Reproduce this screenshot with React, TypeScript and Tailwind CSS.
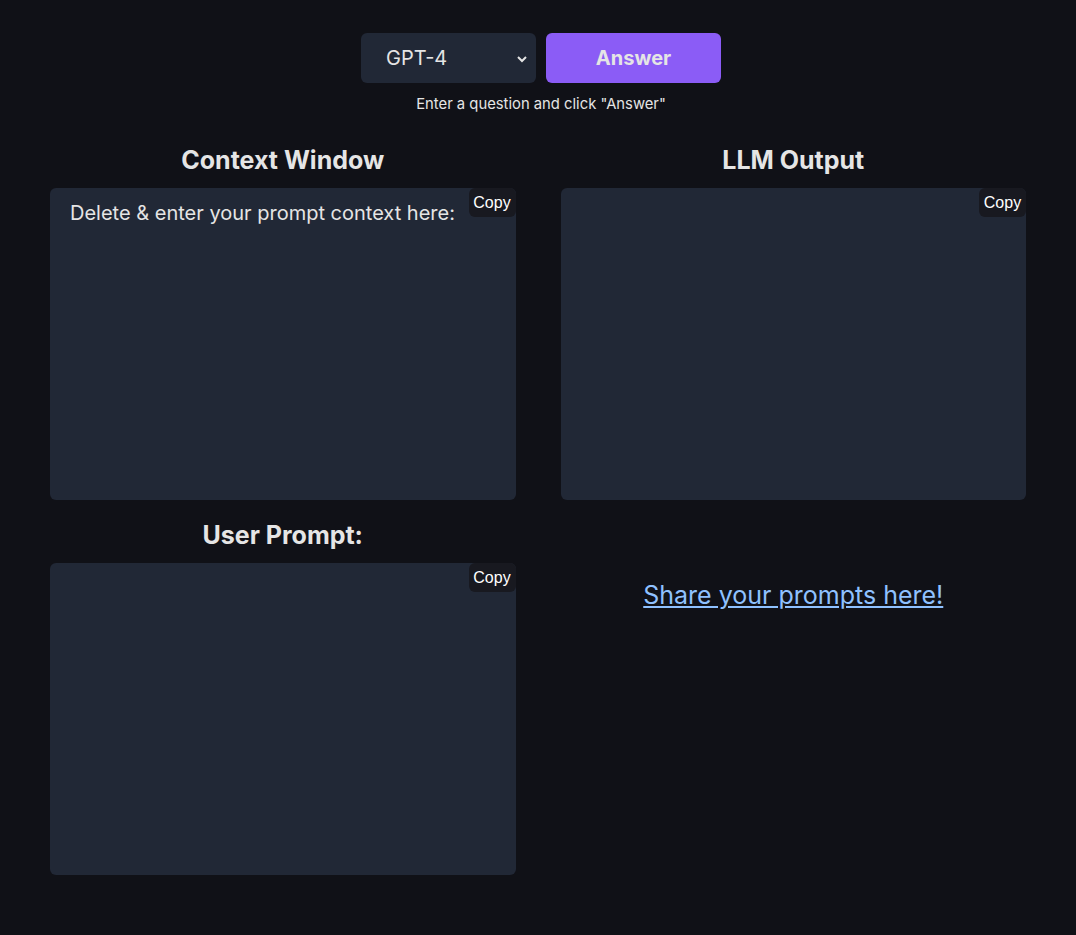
import { useState } from 'react'

function CopyBox({ value, onChange, placeholder }: { value: string; onChange: (v: string) => void; placeholder?: string }) {
  return (
    <div className="relative">
      <textarea
        value={value}
        placeholder={placeholder}
        onChange={(e) => onChange(e.target.value)}
        className="block w-full h-[312px] resize-none rounded-md bg-[#212836] px-5 py-[11px] text-[20px] leading-[28px] text-[#e5e5e5] outline-none"
      />
      <button
        onClick={() => navigator.clipboard?.writeText(value)}
        className="absolute right-0 top-0 h-[29px] w-[47px] rounded-md bg-[#181920] text-[16px] text-white font-['Liberation_Sans',Arial,sans-serif]"
      >
        Copy
      </button>
    </div>
  )
}

export default function App() {
  const [model, setModel] = useState('gpt-4')
  const [context, setContext] = useState('Delete & enter your prompt context here:')
  const [output, setOutput] = useState('')
  const [prompt, setPrompt] = useState('')

  return (
    <div className="min-h-[935px] bg-[#101117] font-['Inter',sans-serif] text-[#e5e5e5] px-[50px] pt-[33px]">
      <div className="flex justify-center gap-[10px] pl-[6px]">
        <div className="relative">
          <select
            value={model}
            onChange={(e) => setModel(e.target.value)}
            className="h-[50px] w-[175px] appearance-none rounded-md bg-[#212836] pl-[25px] text-[20px] text-[#e5e5e5] outline-none"
          >
            <option value="gpt-4">GPT-4</option>
            <option value="gpt-3.5">GPT-3.5</option>
          </select>
          <svg className="pointer-events-none absolute right-[8px] top-[21px]" width="12" height="10" viewBox="0 0 12 10" fill="none">
            <path d="M2 3l4 4 4-4" stroke="#e5e5e5" strokeWidth="2" />
          </svg>
        </div>
        <button
          onClick={() => setOutput('')}
          className="h-[50px] w-[175px] rounded-md bg-[#8b5cf6] text-[20px] font-bold text-[#e5e5e5]"
        >
          Answer
        </button>
      </div>
      <p className="mt-[12px] text-center text-[14.8px] leading-[18px] pl-[6px]">Enter a question and click "Answer"</p>

      <div className="mt-[32px] grid grid-cols-2 gap-x-[45px]">
        <div>
          <h2 className="text-center text-[25px] font-bold leading-[30px] mb-[13px]">Context Window</h2>
          <CopyBox value={context} onChange={setContext} />
        </div>
        <div>
          <h2 className="text-center text-[25px] font-bold leading-[30px] mb-[13px]">LLM Output</h2>
          <CopyBox value={output} onChange={setOutput} />
        </div>
        <div className="mt-[20px]">
          <h2 className="text-center text-[25px] font-bold leading-[30px] mb-[13px]">User Prompt:</h2>
          <CopyBox value={prompt} onChange={setPrompt} />
        </div>
        <div className="mt-[20px] pt-[60px] text-center">
          <a href="#" className="text-[25px] leading-[30px] text-[#8fc1ff] underline">
            Share your prompts here!
          </a>
        </div>
      </div>
    </div>
  )
}
